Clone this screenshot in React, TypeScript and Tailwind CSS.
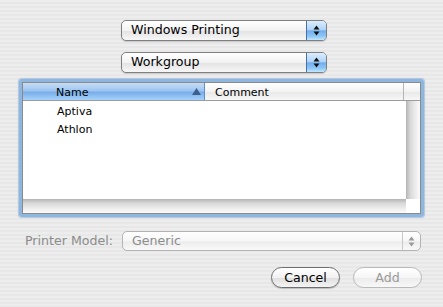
import React from 'react';

const font = { fontFamily: '"DejaVu Sans", "Liberation Sans", sans-serif' };

// 上下矢印（ポップアップの右端）
function Arrows({ color }: { color: string }) {
  return (
    <svg width="7" height="11" viewBox="0 0 7 11">
      <path d="M3.5 0.5 L6.5 4.5 L0.5 4.5 Z" fill={color} />
      <path d="M0.5 6.5 L6.5 6.5 L3.5 10.5 Z" fill={color} />
    </svg>
  );
}

function Popup({ label, width }: { label: string; width: string }) {
  return (
    <div
      className={`${width} flex h-[21px] overflow-hidden rounded-[5px] border border-[#7f7f7f] bg-[linear-gradient(to_bottom,#ffffff,#f2f2f2_50%,#e4e4e4_55%,#f7f7f7)] shadow-[0_1px_1px_rgba(0,0,0,0.15)]`}
    >
      <div className="flex flex-1 items-center pl-[9px] text-[12.6px] text-black" style={font}>
        {label}
      </div>
      <div className="flex w-[20px] items-center justify-center border-l border-[#4a6fa8] bg-[linear-gradient(to_bottom,#dcedfd,#b0d5f8_45%,#74aeec_52%,#8cc6f6_80%,#c4e6ff)]">
        <Arrows color="#111" />
      </div>
    </div>
  );
}

export default function App() {
  return (
    <div
      className="flex h-[307px] w-[443px] flex-col overflow-hidden bg-[repeating-linear-gradient(to_bottom,#ededed_0px,#ededed_2px,#e7e7e7_2px,#e7e7e7_4px)] pt-[20px]"
      style={font}
    >
      {/* プロトコル選択 */}
      <div className="ml-[121px]">
        <Popup label="Windows Printing" width="w-[206px]" />
      </div>
      <div className="ml-[121px] mt-[11px]">
        <Popup label="Workgroup" width="w-[206px]" />
      </div>

      {/* プリンタ一覧 */}
      <div className="ml-[19px] mt-[6px] h-[138px] w-[405px] rounded-[3px] border-[3px] border-[#8fb6de] shadow-[0_0_1px_1px_rgba(120,160,210,0.5)]">
        <div className="flex h-full flex-col border border-[#8a8a8a] bg-white">
          {/* ヘッダー */}
          <div className="flex h-[18px] border-b border-[#9c9c9c] text-[11px] leading-[17px]">
            <div className="flex w-[182px] items-center border-r border-[#5f8fd0] bg-[linear-gradient(to_bottom,#c6ddf6,#9ec5f0_45%,#79aeea_55%,#a6d2fb)] pl-[33px]">
              <span className="flex-1 pt-[1px] text-black">Name</span>
              <svg width="9" height="7" viewBox="0 0 9 7" className="mr-[3px]">
                <path d="M4.5 0 L9 7 L0 7 Z" fill="#3c5f8c" />
              </svg>
            </div>
            <div className="flex w-[199px] items-center border-r border-[#b5b5b5] bg-[linear-gradient(to_bottom,#ffffff,#f3f3f3_50%,#e9e9e9_55%,#f7f7f7)] pl-[10px] pt-[1px] text-black">
              Comment
            </div>
            <div className="flex-1 bg-[linear-gradient(to_bottom,#ffffff,#f3f3f3_50%,#e9e9e9_55%,#f7f7f7)]" />
          </div>
          {/* 行 */}
          <div className="flex flex-1">
            <div className="flex flex-1 flex-col pt-[2px] text-[11px] text-black">
              <div className="h-[18px] pl-[34px] leading-[18px]">Aptiva</div>
              <div className="h-[18px] pl-[34px] leading-[18px]">Athlon</div>
            </div>
            <div className="w-[14px] bg-[linear-gradient(to_right,#b4b4b4,#d8d8d8_30%,#eeeeee_70%,#fafafa)]" />
          </div>
          {/* 横スクロール */}
          <div className="flex h-[14px]">
            <div className="flex-1 bg-[linear-gradient(to_bottom,#b4b4b4,#d8d8d8_30%,#eeeeee_70%,#fafafa)]" />
            <div className="w-[14px] bg-white" />
          </div>
        </div>
      </div>

      {/* プリンタ機種 */}
      <div className="mt-[14px] flex items-center">
        <span className="ml-[25px] w-[97px] text-[12.6px] text-[#8c8c8c]">Printer Model:</span>
        <div className="flex h-[20px] w-[299px] overflow-hidden rounded-[5px] border border-[#b4b4b4] bg-[linear-gradient(to_bottom,#ffffff,#f6f6f6_50%,#ececec_55%,#f9f9f9)]">
          <div className="flex flex-1 items-center pl-[9px] text-[12.6px] text-[#8c8c8c]">Generic</div>
          <div className="flex w-[18px] items-center justify-center border-l border-[#c8c8c8]">
            <Arrows color="#9a9a9a" />
          </div>
        </div>
      </div>

      {/* ボタン */}
      <div className="mt-[16px] flex gap-[13px] pl-[271px]">
        <button
          type="button"
          className="h-[21px] w-[69px] rounded-full border border-[#6e6e6e] bg-[linear-gradient(to_bottom,#ffffff,#f1f1f1_50%,#e0e0e0_55%,#f4f4f4)] text-[12.6px] leading-[19px] text-black shadow-[0_1px_1px_rgba(0,0,0,0.2)]"
        >
          Cancel
        </button>
        <button
          type="button"
          className="h-[21px] w-[69px] rounded-full border border-[#b9b9b9] bg-[linear-gradient(to_bottom,#ffffff,#f6f6f6_50%,#ececec_55%,#f8f8f8)] text-[12.6px] leading-[19px] text-[#9a9a9a]"
        >
          Add
        </button>
      </div>
    </div>
  );
}
